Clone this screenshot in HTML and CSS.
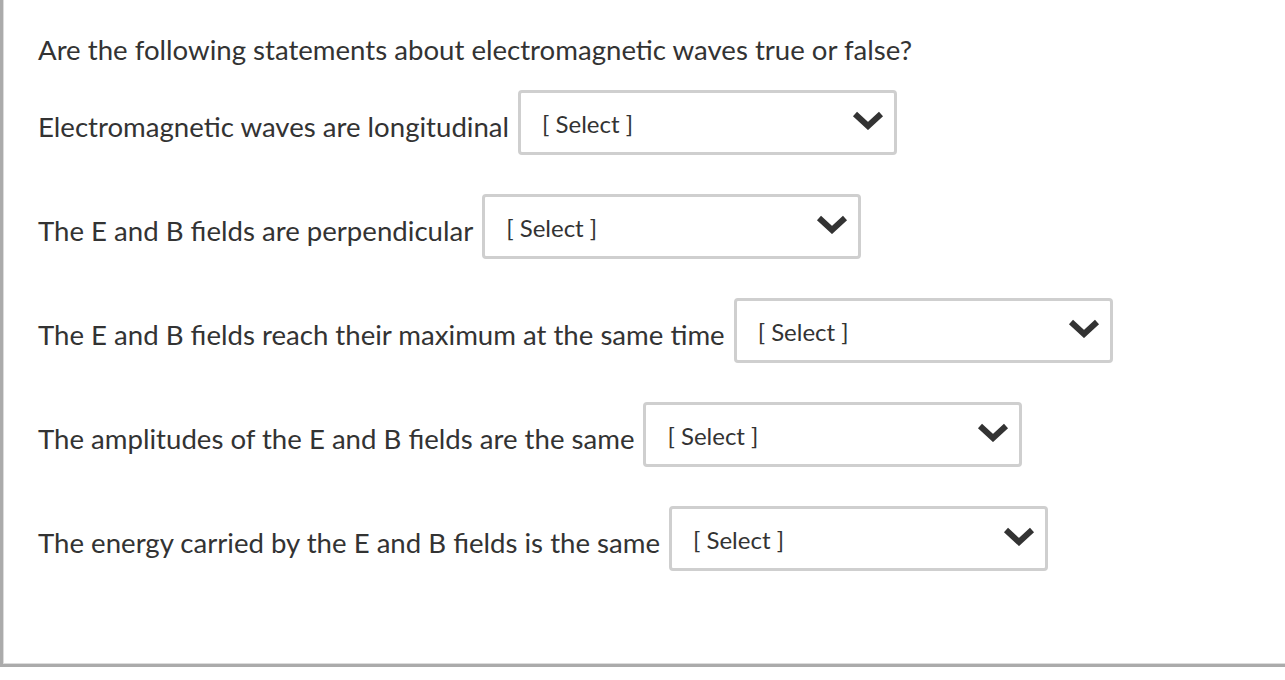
FILE: index.html
```html
<!DOCTYPE html>
<html>
<head>
<meta charset="utf-8">
<link rel="stylesheet" href="styles.css">
</head>
<body>
<div class="card">
  <p class="question">Are the following statements about electromagnetic waves true or false?</p>
  <div class="row">
    <span class="label">Electromagnetic waves are longitudinal</span>
    <div class="select"><span class="value">[ Select ]</span><svg class="chev" viewBox="0 0 32 20" width="32" height="20"><path d="M3 4 L16 16 L29 4" fill="none" stroke="#333" stroke-width="6" stroke-linejoin="miter"/></svg></div>
  </div>
  <div class="row">
    <span class="label">The E and B fields are perpendicular</span>
    <div class="select"><span class="value">[ Select ]</span><svg class="chev" viewBox="0 0 32 20" width="32" height="20"><path d="M3 4 L16 16 L29 4" fill="none" stroke="#333" stroke-width="6" stroke-linejoin="miter"/></svg></div>
  </div>
  <div class="row">
    <span class="label">The E and B fields reach their maximum at the same time</span>
    <div class="select"><span class="value">[ Select ]</span><svg class="chev" viewBox="0 0 32 20" width="32" height="20"><path d="M3 4 L16 16 L29 4" fill="none" stroke="#333" stroke-width="6" stroke-linejoin="miter"/></svg></div>
  </div>
  <div class="row">
    <span class="label">The amplitudes of the E and B fields are the same</span>
    <div class="select"><span class="value">[ Select ]</span><svg class="chev" viewBox="0 0 32 20" width="32" height="20"><path d="M3 4 L16 16 L29 4" fill="none" stroke="#333" stroke-width="6" stroke-linejoin="miter"/></svg></div>
  </div>
  <div class="row">
    <span class="label">The energy carried by the E and B fields is the same</span>
    <div class="select"><span class="value">[ Select ]</span><svg class="chev" viewBox="0 0 32 20" width="32" height="20"><path d="M3 4 L16 16 L29 4" fill="none" stroke="#333" stroke-width="6" stroke-linejoin="miter"/></svg></div>
  </div>
</div>
</body>
</html>
```
FILE: styles.css
```css
html, body {
  margin: 0;
  padding: 0;
  background: #fff;
}
body {
  font-family: Lato, "Liberation Sans", sans-serif;
  color: #333;
}
.card {
  width: 1285px;
  height: 667px;
  box-sizing: border-box;
  border-left: 3px solid #ababab;
  border-bottom: 3px solid #ababab;
  box-shadow: inset 1px -1px 0 #dcdcdc;
  padding: 32px 0 0 35px;
}
.question {
  margin: 0 0 22px 0;
  font-size: 27.6px;
  line-height: 36px;
  color: #333;
}
.row {
  display: flex;
  align-items: flex-start;
  margin-bottom: 39px;
  font-size: 27.6px;
  color: #333;
}
.label {
  margin: 20px 9px 0 0;
  line-height: normal;
}
.select {
  width: 379px;
  height: 65px;
  box-sizing: border-box;
  border: 3px solid #cfcfcf;
  border-radius: 4px;
  display: flex;
  align-items: center;
  justify-content: space-between;
  padding: 0 10px 0 21px;
  font-size: 24px;
  color: #333;
}
.value {
  padding-top: 2px;
}
.chev {
  display: block;
  margin-top: -6px;
}
```
